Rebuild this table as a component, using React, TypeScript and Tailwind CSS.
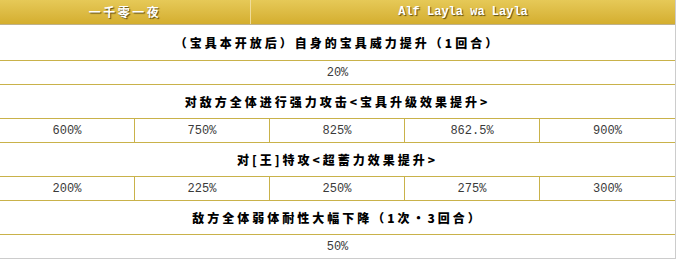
import React from "react";

function Title({ text, h }: { text: string; h: string }) {
  return (
    <div
      className={`${h} flex items-center justify-center border-b border-[#c9b24a] bg-white text-[12px] font-black tracking-[3px] text-black font-['Noto_Sans_CJK_SC','Liberation_Sans',sans-serif]`}
    >
      {text}
    </div>
  );
}

function Single({ v, last }: { v: string; last?: boolean }) {
  return (
    <div
      className={`h-[24px] flex items-center justify-center bg-white text-[12px] text-[#3a3a3a] font-['Liberation_Mono',monospace] ${last ? "border-b border-[#cccccc]" : "border-b border-[#c9b24a]"}`}
    >
      {v}
    </div>
  );
}

function Five({ vals }: { vals: string[] }) {
  return (
    <div className="h-[24px] grid grid-cols-5 border-b border-[#c9b24a] bg-white text-[12px] text-[#3a3a3a] font-['Liberation_Mono',monospace]">
      {vals.map((v, i) => (
        <div key={i} className={`flex items-center justify-center ${i < 4 ? "border-r border-[#c9b24a]" : ""}`}>
          {v}
        </div>
      ))}
    </div>
  );
}

export default function App() {
  return (
    <div className="w-[677px] h-[261px] bg-white">
      <div className="w-[676px] border-r border-[#cccccc]">
        <div className="h-[25px] flex bg-gradient-to-b from-[#e6c957] to-[#d4ae2e] border-b border-[#bfb18a] text-white font-bold text-[12px] [text-shadow:1px_1px_1px_#5a4a10]">
          <div className="w-[251px] flex items-center justify-center border-r border-[#efdc9a] tracking-[2.5px] font-['Noto_Sans_CJK_SC','Liberation_Sans',sans-serif]">
            一千零一夜
          </div>
          <div className="flex-1 flex items-center justify-center font-['Liberation_Mono',monospace]">
            Alf Layla wa Layla
          </div>
        </div>
        <Title h="h-[36px]" text="（宝具本开放后）自身的宝具威力提升（1回合）" />
        <Single v="20%" />
        <Title h="h-[34px]" text="对敌方全体进行强力攻击<宝具升级效果提升>" />
        <Five vals={["600%", "750%", "825%", "862.5%", "900%"]} />
        <Title h="h-[34px]" text="对[王]特攻<超蓄力效果提升>" />
        <Five vals={["200%", "225%", "250%", "275%", "300%"]} />
        <Title h="h-[34px]" text="敌方全体弱体耐性大幅下降（1次·3回合）" />
        <Single v="50%" last />
      </div>
    </div>
  );
}
